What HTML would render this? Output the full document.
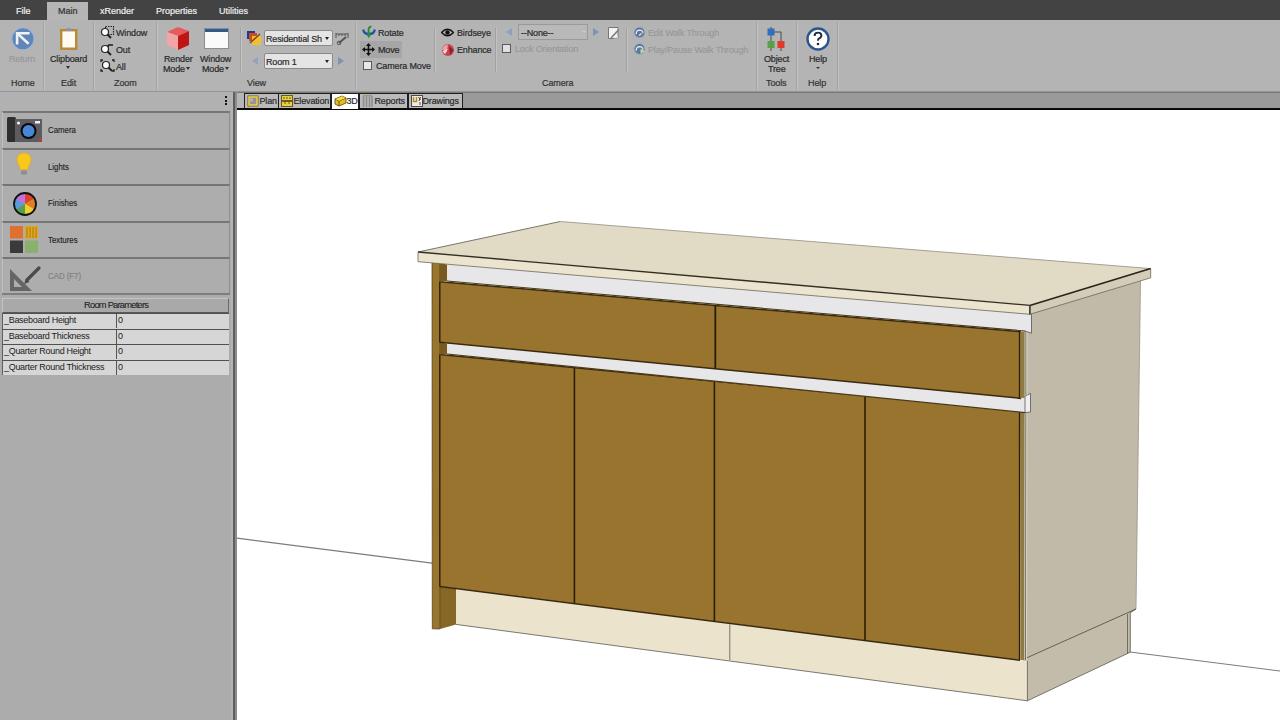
<!DOCTYPE html>
<html><head><meta charset="utf-8">
<style>
*{margin:0;padding:0;box-sizing:border-box}
html,body{width:1280px;height:720px;overflow:hidden;background:#fff;font-family:"Liberation Sans",sans-serif;}
.a{position:absolute;white-space:nowrap}
#top{position:absolute;left:0;top:0;width:1280px;height:20px;background:#434343}
.tt{position:absolute;top:5.5px;font-size:9px;color:#f0f0f0;line-height:11px;-webkit-text-stroke:0.2px #f0f0f0}
#ribbon{position:absolute;left:0;top:20px;width:1280px;height:72px;background:#b4b4b4;border-bottom:1px solid #959595}
.rt{position:absolute;margin-top:0.5px;font-size:9px;line-height:11px;color:#2a2a2a;white-space:nowrap;-webkit-text-stroke:0.2px #2a2a2a;letter-spacing:-0.15px}
.gl{position:absolute;margin-top:1px;font-size:9px;line-height:11px;color:#333;white-space:nowrap;-webkit-text-stroke:0.2px #333;letter-spacing:-0.1px}
.sep{position:absolute;width:2px;border-left:1px solid #a2a2a2;border-right:1px solid #c2c2c2}
.dis{color:#989898;-webkit-text-stroke:0.15px #989898}
#panel{position:absolute;left:0;top:92px;width:237px;height:628px;background:#acacac}
.ph{position:absolute;left:0;top:0;width:232px;height:19px;background:#b1b1b1}
.sec{position:absolute;left:2px;width:228px;background:#adadad;border-top:2px solid #767676;border-left:1px solid #c0c0c0;border-right:1px solid #8e8e8e}
.st{position:absolute;left:45.3px;font-size:9.8px;line-height:11px;color:#222;white-space:nowrap;letter-spacing:0;transform:scaleX(0.8);transform-origin:0 0;margin-top:-1px;-webkit-text-stroke:0.15px #222}
.row{position:absolute;left:2px;width:227px;height:15.5px;background:#d6d6d6;border-top:1.5px solid #505050;border-left:1px solid #606060}
.rl{position:absolute;left:1px;top:1px;font-size:9px;line-height:11px;color:#222;letter-spacing:-0.3px}
.rv{position:absolute;left:113px;top:0;height:14px;border-left:1.5px solid #555;padding-left:1px;font-size:9px;line-height:12px;color:#222}
#tabbar{position:absolute;left:237px;top:92px;width:1043px;height:18px;background:#9a9a9a;border-top:1px solid #7a7a7a;border-bottom:2px solid #0a0a0a}
.tab{position:absolute;top:0px;height:15px;background:#bababa;border:1.5px solid #1e1e1e;border-bottom:none;font-size:9px;line-height:13px;color:#2a2a2a}
</style></head><body>

<div id="top">
  <div class="tt" style="left:16px">File</div>
  <div style="position:absolute;left:47px;top:2px;width:41px;height:18px;background:#b5b5b5"></div>
  <div class="tt" style="left:58px;color:#333;-webkit-text-stroke:0.2px #333">Main</div>
  <div class="tt" style="left:100px">xRender</div>
  <div class="tt" style="left:156px">Properties</div>
  <div class="tt" style="left:219px">Utilities</div>
</div>

<div id="ribbon">
  <!-- separators (ribbon y offset 20) -->
  <div class="sep" style="left:43px;top:2px;height:68px"></div>
  <div class="sep" style="left:93px;top:2px;height:68px"></div>
  <div class="sep" style="left:156px;top:2px;height:68px"></div>
  <div class="sep" style="left:240px;top:7px;height:45px"></div>
  <div class="sep" style="left:355px;top:2px;height:68px"></div>
  <div class="sep" style="left:434px;top:8px;height:44px"></div>
  <div class="sep" style="left:495px;top:8px;height:44px"></div>
  <div class="sep" style="left:626px;top:8px;height:44px"></div>
  <div class="sep" style="left:756px;top:2px;height:68px"></div>
  <div class="sep" style="left:796px;top:2px;height:68px"></div>
  <div class="sep" style="left:837px;top:2px;height:68px"></div>

  <!-- Home -->
  <svg class="a" style="left:10px;top:6px" width="26" height="26" viewBox="0 0 26 26">
    <circle cx="12.9" cy="12.7" r="11.2" fill="#5f86b6" stroke="#a2b6d0" stroke-width="1.3"/>
    <path d="M7.1 18.5 L7.1 7.25 L19.6 7.25" stroke="#eef2f6" stroke-width="2.6" fill="none" stroke-linejoin="miter"/>
    <path d="M7.8 7.9 L18.6 17.7" stroke="#eef2f6" stroke-width="2.6"/>
  </svg>
  <div class="rt dis" style="left:9px;top:33px">Return</div>
  <div class="gl" style="left:11px;top:57px">Home</div>

  <!-- Edit -->
  <svg class="a" style="left:59px;top:6px" width="20" height="24" viewBox="0 0 20 24">
    <rect x="2.2" y="4.2" width="15" height="18.5" fill="#fdfbf2" stroke="#b78a34" stroke-width="2.4"/>
    <path d="M6.5 5 Q6.5 2 9.7 2 Q13 2 13 5 Z" fill="#8f93a8"/>
  </svg>
  <div class="rt" style="left:50px;top:33px">Clipboard</div>
  <div class="a" style="left:66px;top:46px;width:0;height:0;border-left:2.5px solid transparent;border-right:2.5px solid transparent;border-top:3px solid #333"></div>
  <div class="gl" style="left:61px;top:57px">Edit</div>

  <!-- Zoom -->
  <svg class="a" style="left:100px;top:5px" width="16" height="50" viewBox="0 0 16 50">
    <g fill="none" stroke="#222" stroke-width="1.2">
      <rect x="5.5" y="1.5" width="8" height="8" stroke-dasharray="1.5 1"/>
      <circle cx="5" cy="7" r="3.5" fill="#fff"/>
      <path d="M7.5 9.5 L11 13" stroke-width="2"/>
      <path d="M8 20 L13 20" stroke-width="1.6"/><path d="M8 20 L8 22" stroke-width="1.6"/>
      <circle cx="5" cy="24" r="3.5" fill="#fff"/>
      <path d="M7.5 26.5 L11 30" stroke-width="2"/>
      <path d="M1 37 L1 35 L3 35 M12 35 L14 35 L14 37 M1 44 L1 46 L3 46 M12 46 L14 46 L14 44" stroke-width="1.3"/>
      <circle cx="6" cy="40" r="3.5" fill="#fff"/>
      <path d="M8.5 42.5 L12 46" stroke-width="2"/>
    </g>
  </svg>
  <div class="rt" style="left:116px;top:7px">Window</div>
  <div class="rt" style="left:116px;top:24px">Out</div>
  <div class="rt" style="left:116px;top:41px">All</div>
  <div class="gl" style="left:114px;top:57px">Zoom</div>

  <!-- Render Mode -->
  <svg class="a" style="left:166px;top:6px" width="24" height="25" viewBox="0 0 24 25">
    <path d="M1 6 L12 1 L23 5 L12 10 Z" fill="#e65a5a"/>
    <path d="M1 6 L12 10 L12 24 L1 19 Z" fill="#f3a4a4"/>
    <path d="M12 10 L23 5 L23 19 L12 24 Z" fill="#c01515"/>
  </svg>
  <div class="rt" style="left:164px;top:33px">Render</div>
  <div class="rt" style="left:163px;top:43px">Mode<span style="display:inline-block;margin-left:1px;vertical-align:2px;width:0;height:0;border-left:2.5px solid transparent;border-right:2.5px solid transparent;border-top:3px solid #333;-webkit-text-stroke:0"></span></div>

  <!-- Window Mode -->
  <svg class="a" style="left:204px;top:8px" width="25" height="21" viewBox="0 0 25 21">
    <rect x="0.5" y="0.5" width="24" height="20" fill="#fafafa" stroke="#8d8d8d"/>
    <rect x="1" y="1" width="23" height="3" fill="#2e5a90"/>
  </svg>
  <div class="rt" style="left:200px;top:33px">Window</div>
  <div class="rt" style="left:202px;top:43px">Mode<span style="display:inline-block;margin-left:1px;vertical-align:2px;width:0;height:0;border-left:2.5px solid transparent;border-right:2.5px solid transparent;border-top:3px solid #333;-webkit-text-stroke:0"></span></div>

  <!-- View -->
  <svg class="a" style="left:247px;top:11px" width="15" height="15" viewBox="0 0 15 15">
    <rect x="0" y="0" width="8" height="8" fill="#1a3a9a"/>
    <rect x="2" y="2" width="8" height="8" fill="#d04a20"/>
    <rect x="5" y="5" width="9" height="9" fill="#f0c030"/>
    <path d="M3 12 L13 3" stroke="#7a4a20" stroke-width="1.5"/>
  </svg>
  <div class="a" style="left:264px;top:10px;width:69px;height:16px;background:#e4e4e4;border:1.5px solid #8a8a8a;border-radius:2px"></div>
  <div class="rt" style="left:266px;top:13px;width:57px;overflow:hidden">Residential Sh</div>
  <div class="a" style="left:325px;top:17px;width:0;height:0;border-left:2.5px solid transparent;border-right:2.5px solid transparent;border-top:3px solid #222"></div>
  <svg class="a" style="left:335px;top:12px" width="14" height="13" viewBox="0 0 14 13">
    <path d="M1 1 L1 6 M1 2 L13 2 M13 1 L13 6 M4 2 L4 4 M7 2 L7 4 M10 2 L10 4" stroke="#555" stroke-width="1" fill="none"/>
    <path d="M11 5 L4 11" stroke="#555" stroke-width="2"/>
    <circle cx="4" cy="11" r="1.8" fill="none" stroke="#555"/>
  </svg>
  <div class="a" style="left:264px;top:33px;width:69px;height:16px;background:#e4e4e4;border:1.5px solid #8a8a8a;border-radius:2px"></div>
  <div class="rt" style="left:266px;top:36px">Room 1</div>
  <div class="a" style="left:325px;top:40px;width:0;height:0;border-left:2.5px solid transparent;border-right:2.5px solid transparent;border-top:3px solid #222"></div>
  <div class="a" style="left:252px;top:37px;width:0;height:0;border-top:4px solid transparent;border-bottom:4px solid transparent;border-right:6px solid #93a3b8"></div>
  <div class="a" style="left:338px;top:37px;width:0;height:0;border-top:4px solid transparent;border-bottom:4px solid transparent;border-left:6px solid #7d93b0"></div>
  <div class="gl" style="left:247px;top:57px">View</div>

  <!-- Camera group: rotate/move -->
  <svg class="a" style="left:362px;top:5px" width="14" height="14" viewBox="0 0 14 14">
    <path d="M1.2 4.5 Q1.8 9 7 9 Q12.2 9 12.8 4.5" stroke="#1f56a6" stroke-width="2.3" fill="none"/>
    <path d="M9.5 1.5 Q6.3 1.6 6.6 5.5 L6.8 10" stroke="#2f8f30" stroke-width="2" fill="none"/>
    <path d="M4.3 9.3 L6.8 13.2 L9.3 9.3 Z" fill="#2f8f30"/>
  </svg>
  <div class="rt" style="left:378px;top:7px">Rotate</div>
  <div class="a" style="left:360px;top:21px;width:42px;height:17px;background:#a6a6a6"></div>
  <svg class="a" style="left:362px;top:23px" width="13" height="13" viewBox="0 0 13 13">
    <path d="M6.5 1 L6.5 12 M1 6.5 L12 6.5" stroke="#111" stroke-width="1.6"/>
    <path d="M6.5 0 L4 3 L9 3 Z M6.5 13 L4 10 L9 10 Z M0 6.5 L3 4 L3 9 Z M13 6.5 L10 4 L10 9 Z" fill="#111"/>
  </svg>
  <div class="rt" style="left:378px;top:24px">Move</div>
  <div class="a" style="left:363px;top:41px;width:9px;height:9px;background:#e8e8e8;border:1px solid #5a5a5a"></div>
  <div class="rt" style="left:376px;top:40px">Camera Move</div>

  <svg class="a" style="left:441px;top:8px" width="13" height="9" viewBox="0 0 13 9">
    <path d="M0.5 4.5 Q6.5 -2 12.5 4.5 Q6.5 11 0.5 4.5 Z" fill="none" stroke="#111" stroke-width="1.4"/>
    <circle cx="6.5" cy="4.5" r="2.2" fill="#111"/>
  </svg>
  <div class="rt" style="left:457px;top:7px">Birdseye</div>
  <svg class="a" style="left:441px;top:23px" width="14" height="14" viewBox="0 0 14 14">
    <circle cx="7" cy="7" r="6" fill="#c84450"/>
    <path d="M1 7 Q2 2 7 1.5 L6 7 Z" fill="#f0a0a8"/>
    <path d="M1.5 8 L7 6 L4 11 Z" fill="#fbe0e2"/>
    <path d="M8 3 L12.5 7 L9 12 Z" fill="#8a2030"/>
  </svg>
  <div class="rt" style="left:457px;top:24px">Enhance</div>

  <div class="a" style="left:506px;top:8px;width:0;height:0;border-top:4px solid transparent;border-bottom:4px solid transparent;border-right:6px solid #8fa2bb"></div>
  <div class="a" style="left:518px;top:4px;width:70px;height:16px;background:#b9b9b9;border:1px solid #9a9a9a"></div>
  <div class="rt" style="left:521px;top:7px">--None--</div>
  <div class="a" style="left:582px;top:11px;width:0;height:0;border-left:2px solid transparent;border-right:2px solid transparent;border-top:2px solid #cfcfcf"></div>
  <div class="a" style="left:593px;top:8px;width:0;height:0;border-top:4px solid transparent;border-bottom:4px solid transparent;border-left:6px solid #7d93b0"></div>
  <svg class="a" style="left:607px;top:5.5px" width="14" height="14" viewBox="0 0 14 14">
    <path d="M1.5 1.5 L11 1.5 L11 12.5 L1.5 12.5 Z" fill="#f2f2f2" stroke="#777" stroke-width="1"/>
    <path d="M4 12 L11.5 4" stroke="#7a7a7a" stroke-width="1.6"/>
    <path d="M7 12.5 L11 12.5 L11 9" fill="#d8d8d8"/>
  </svg>
  <div class="a" style="left:502px;top:24px;width:9px;height:9px;background:#e0e0e0;border:1px solid #5a5a5a"></div>
  <div class="rt dis" style="left:515px;top:23px">Lock Orientation</div>

  <svg class="a" style="left:633px;top:6px" width="14" height="30" viewBox="0 0 14 30">
    <circle cx="6.5" cy="6.5" r="5.6" fill="#5f7696" stroke="#a3b0c4" stroke-width="1.1"/>
    <path d="M3.3 8.2 Q3 4.2 6.6 4.1 Q10 4.1 9.9 7.2" stroke="#e4eaf2" stroke-width="1.3" fill="none"/>
    <path d="M6 9.5 L8.5 7.5" stroke="#e4eaf2" stroke-width="1.4"/>
    <circle cx="6.5" cy="23" r="5.6" fill="#5f7696" stroke="#a3b0c4" stroke-width="1.1"/>
    <path d="M3.3 24.7 Q3 20.7 6.6 20.6 Q10 20.6 9.9 23.7" stroke="#e4eaf2" stroke-width="1.3" fill="none"/>
    <path d="M7.5 22.8 L12 25.3 L7.5 27.8 Z" fill="#b8dca0"/>
  </svg>
  <div class="rt dis" style="left:648px;top:7px">Edit Walk Through</div>
  <div class="rt dis" style="left:648px;top:24px">Play/Pause Walk Through</div>
  <div class="gl" style="left:542px;top:57px">Camera</div>

  <!-- Tools -->
  <svg class="a" style="left:767px;top:7px" width="20" height="25" viewBox="0 0 20 25">
    <path d="M4 0 L4 24 M4 5 L14 5 L14 24" stroke="#4a4a4a" stroke-width="1" fill="none"/>
    <rect x="0.5" y="1.5" width="7" height="7" fill="#2f6fc0"/>
    <rect x="0.5" y="14" width="7" height="7" fill="#5aa04a"/>
    <rect x="10.5" y="14" width="7" height="7" fill="#e03a2a"/>
  </svg>
  <div class="rt" style="left:764px;top:33px">Object</div>
  <div class="rt" style="left:768px;top:43px">Tree</div>
  <div class="gl" style="left:766px;top:57px">Tools</div>

  <!-- Help -->
  <svg class="a" style="left:806px;top:7px" width="24" height="24" viewBox="0 0 24 24">
    <circle cx="12" cy="12" r="10.5" fill="#fff" stroke="#2a5590" stroke-width="2.4"/>
    <path d="M8.6 9 Q8.6 5.6 12 5.6 Q15.4 5.6 15.4 8.6 Q15.4 10.6 12.8 11.6 Q12 12 12 13.8" stroke="#1a2a40" stroke-width="1.9" fill="none"/>
    <circle cx="12" cy="17" r="1.3" fill="#1a2a40"/>
  </svg>
  <div class="rt" style="left:809px;top:33px">Help</div>
  <div class="a" style="left:816px;top:47px;width:0;height:0;border-left:2px solid transparent;border-right:2px solid transparent;border-top:2.5px solid #333"></div>
  <div class="gl" style="left:808px;top:57px">Help</div>
</div>

<div id="panel">
  <div class="ph"></div>
  <div class="a" style="left:225px;top:4px;width:2px;height:2px;background:#111"></div>
  <div class="a" style="left:225px;top:7.5px;width:2px;height:2px;background:#111"></div>
  <div class="a" style="left:225px;top:11px;width:2px;height:2px;background:#111"></div>
  <div class="a" style="left:231px;top:0;width:2px;height:628px;background:#b4b4b4"></div>
  <div class="a" style="left:233px;top:0;width:2px;height:628px;background:#5e5e5e"></div>
  <div class="a" style="left:235px;top:0;width:2px;height:628px;background:#8c8c8c"></div>

  <div class="sec" style="top:18.5px;height:37.5px">
    <svg class="a" style="left:3.5px;top:4px" width="36" height="27" viewBox="0 0 36 27">
      <rect x="0" y="0" width="9" height="25" rx="1.5" fill="#2e2e2e"/>
      <rect x="8" y="2" width="27" height="23" fill="#5c5c60"/>
      <circle cx="21.5" cy="14" r="8" fill="#0a0a0a"/>
      <circle cx="21.5" cy="14" r="6" fill="#4a86d8"/>
      <circle cx="11.5" cy="6" r="1.6" fill="#f0f0f0"/>
      <rect x="28" y="4" width="5" height="2.5" fill="#f0f0f0"/>
      <circle cx="33" cy="23" r="1.8" fill="#c83a3a"/>
    </svg>
    <div class="st" style="top:12px">Camera</div>
  </div>
  <div class="sec" style="top:55.5px;height:37px">
    <svg class="a" style="left:12.8px;top:2.5px" width="18" height="26" viewBox="0 0 18 26">
      <path d="M8 1 C3.2 1 1 4.5 1 7.8 C1 11 3.6 13 4.2 17.5 L11.8 17.5 C12.4 13 15 11 15 7.8 C15 4.5 12.8 1 8 1 Z" fill="#f9c81c" stroke="#e8a818" stroke-width="0.8"/>
      <rect x="5" y="18.5" width="6" height="4" rx="1.2" fill="#8c8c94"/>
    </svg>
    <div class="st" style="top:12px">Lights</div>
  </div>
  <div class="sec" style="top:92px;height:37px">
    <svg class="a" style="left:8.5px;top:5px" width="26" height="26" viewBox="0 0 26 26">
      <circle cx="13" cy="13" r="11" fill="#e8a030"/>
      <path d="M13 13 L13 2 A11 11 0 0 1 22.5 7.5 Z" fill="#d84030"/>
      <path d="M13 13 L22.5 7.5 A11 11 0 0 1 22.5 18.5 Z" fill="#e08020"/>
      <path d="M13 13 L22.5 18.5 A11 11 0 0 1 13 24 Z" fill="#f0d030"/>
      <path d="M13 13 L13 24 A11 11 0 0 1 3.5 18.5 Z" fill="#50a050"/>
      <path d="M13 13 L3.5 18.5 A11 11 0 0 1 3.5 7.5 Z" fill="#5a9ae0"/>
      <path d="M13 13 L3.5 7.5 A11 11 0 0 1 13 2 Z" fill="#c070e0"/>
      <circle cx="13" cy="13" r="11" fill="none" stroke="#111" stroke-width="1.8"/>
    </svg>
    <div class="st" style="top:12px">Finishes</div>
  </div>
  <div class="sec" style="top:128.5px;height:37px">
    <svg class="a" style="left:7px;top:3px" width="30" height="28" viewBox="0 0 30 28">
      <rect x="0" y="0" width="13" height="12.5" fill="#e07030"/>
      <rect x="15" y="0" width="13" height="12.5" fill="#e0a820"/>
      <path d="M17 1 L17 12 M20 1 L20 12 M23 1 L23 12 M26 1 L26 12" stroke="#9a7010" stroke-width="0.8"/>
      <rect x="0" y="14.5" width="13" height="12.5" fill="#3a3a3a"/>
      <rect x="15" y="14.5" width="13" height="12.5" fill="#8ab070"/>
    </svg>
    <div class="st" style="top:12px">Textures</div>
  </div>
  <div class="sec" style="top:165px;height:37px">
    <svg class="a" style="left:3px;top:1px" width="36" height="32" viewBox="0 0 36 32">
      <path d="M4 9 L4 31 L26 31 Z M8 19 L8 27 L16 27 Z" fill="#656565" fill-rule="evenodd"/>
      <path d="M21 20 L33 8" stroke="#4a4a4a" stroke-width="3.2" stroke-linecap="round"/>
      <path d="M18 24 L20 18.5 L23.5 22 Z" fill="#4a4a4a"/>
    </svg>
    <div class="st" style="top:12px;color:#828282;-webkit-text-stroke:0.2px #828282">CAD (F7)</div>
  </div>
  <div class="a" style="left:2px;top:201px;width:228px;height:2px;background:#7e7e7e"></div>

  <div class="a" style="left:2px;top:206px;width:227px;height:15px;background:#a9a9a9;border:1px solid #c4c4c4;border-bottom:1.5px solid #5a5a5a;border-right:1.5px solid #6a6a6a"></div>
  <div class="a" style="left:84px;top:208px;font-size:9.3px;line-height:11px;color:#222;letter-spacing:-0.75px;-webkit-text-stroke:0.1px #222">Room Parameters</div>
  <div class="row" style="top:221px"><div class="rl">_Baseboard Height</div><div class="rv">0</div></div>
  <div class="row" style="top:236.5px"><div class="rl">_Baseboard Thickness</div><div class="rv">0</div></div>
  <div class="row" style="top:252px"><div class="rl">_Quarter Round Height</div><div class="rv">0</div></div>
  <div class="row" style="top:267.5px"><div class="rl">_Quarter Round Thickness</div><div class="rv">0</div></div>
</div>

<div id="tabbar">
  <div class="a" style="left:0;top:0;width:7px;height:15px;background:#b6b6b6"></div>
  <div class="tab" style="left:7px;width:35px"></div>
  <svg class="a" style="left:9.5px;top:1.5px" width="12" height="12" viewBox="0 0 12 12">
    <rect x="1" y="1" width="10" height="10" fill="#9a9098" stroke="#6a5a20" stroke-width="1"/>
    <rect x="2" y="2" width="8" height="8" fill="none" stroke="#e8d040" stroke-width="1.5"/>
    <rect x="3" y="3.5" width="3" height="3" fill="#b8b0b8"/>
  </svg>
  <div class="rt" style="left:22.5px;top:2px">Plan</div>
  <div class="tab" style="left:41px;width:53px"></div>
  <svg class="a" style="left:43.5px;top:1.5px" width="12" height="12" viewBox="0 0 12 12">
    <rect x="0.5" y="0.5" width="11" height="5" fill="#e8d040" stroke="#6a5a20" stroke-width="1"/>
    <rect x="0.5" y="6.5" width="11" height="5" fill="#e8d040" stroke="#6a5a20" stroke-width="1"/>
    <path d="M3 2 V4 M6 2 V4 M9 2 V4 M3 8 H5 M7 8 H9" stroke="#6a5a20" stroke-width="1"/>
  </svg>
  <div class="rt" style="left:56.5px;top:2px">Elevation</div>
  <div class="tab" style="left:94px;width:28px;background:#fff;height:16px"></div>
  <svg class="a" style="left:96.5px;top:1.5px" width="13" height="12" viewBox="0 0 13 12">
    <path d="M1 4 L8 1 L12 3 L12 8 L5 11 L1 9 Z" fill="#e2bc20" stroke="#6a5410" stroke-width="0.9"/>
    <path d="M1 4 L5 6 L12 3 M5 6 L5 11" stroke="#6a5410" stroke-width="0.9" fill="none"/>
    <path d="M1.5 4.2 L8 1.3 L11.5 3 L5 5.8 Z" fill="#f4dc50"/>
  </svg>
  <div class="rt" style="left:109.5px;top:2px">3D</div>
  <div class="tab" style="left:122px;width:49px"></div>
  <svg class="a" style="left:125px;top:0.5px" width="11" height="14" viewBox="0 0 11 14">
    <path d="M1.5 2 V13 M4.5 2 V13 M7.5 2 V13 M10 2 V13" stroke="#8e8e8e" stroke-width="1.6"/>
    <path d="M1 1.5 H10" stroke="#a09a70" stroke-width="1.2"/>
  </svg>
  <div class="rt" style="left:137.5px;top:2px">Reports</div>
  <div class="tab" style="left:171px;width:55px"></div>
  <svg class="a" style="left:173.5px;top:1.5px" width="12" height="12" viewBox="0 0 12 12">
    <rect x="0.5" y="0.5" width="11" height="11" fill="#ecebe4" stroke="#4a4a4a"/>
    <path d="M2.5 2 V6.5 H5.5 V2" stroke="#b08a20" stroke-width="1.4" fill="none"/>
    <path d="M7.5 2 L9.5 5 M9.5 2 L8 6 M9 7 V10" stroke="#4a4a4a" stroke-width="1" fill="none"/>
  </svg>
  <div class="rt" style="left:185.5px;top:2px">Drawings</div>
</div>

<div style="position:absolute;left:237px;top:110px;width:1043px;height:610px;background:#fff"></div>
<svg class="a" style="left:0;top:0" width="1280" height="720" viewBox="0 0 1280 720">
  <!-- floor lines -->
  <path d="M237 538.2 L432 563.1" stroke="#7c7c7c" stroke-width="1.2" fill="none"/>
  <path d="M1130 652 L1280 671" stroke="#7c7c7c" stroke-width="1.2" fill="none"/>
  <!-- right side panel -->
  <polygon points="1024,314 1140.5,281 1136,609 1023,659.5" fill="#c1baa8"/>
  <path d="M1140.5 281 L1136 609" stroke="#9a9488" stroke-width="0.8" fill="none"/>
  <!-- toe kick right side -->
  <polygon points="1023,658 1136,607.5 1130.3,612.6 1130.3,652.2 1027.4,700.8 1023,700" fill="#c3bcaa"/>
  <path d="M1027.4 700.8 L1130.3 652.2 L1130.3 612.6 M1127.5 614 L1127.5 653.5" stroke="#5a5a50" stroke-width="0.8" fill="none"/>
  <path d="M1023 659.5 L1136 609 L1130.3 612.6" stroke="#55554a" stroke-width="0.9" fill="none"/>
  <path d="M1025.5 661 L1025.5 700" stroke="#55554a" stroke-width="0.7" fill="none"/>
  <path d="M1024 660 L1024 700" stroke="#777" stroke-width="0.8"/>
  <!-- toe kick front -->
  <polygon points="456,589.4 1027.4,661 1027.4,700.8 456,624.4" fill="#ebe3cc"/>
  <path d="M456 624.4 L1027.4 700.8 L1027.4 661" stroke="#6a6a60" stroke-width="0.9" fill="none"/>
  <path d="M729.8 624.4 L729.8 660" stroke="#6a6a60" stroke-width="0.9"/>
  <!-- end panel recess -->
  <polygon points="439.6,586.5 456,589 456,624.4 440,629" fill="#876626"/>
  <!-- end panel front face -->
  <polygon points="432,262.5 439.8,263.3 439.8,629 432.3,628.8" fill="#9a752e" stroke="#4a3810" stroke-width="0.7"/>
  <!-- doors -->
  <polygon points="439.6,354.5 1021,411 1020,660.3 439.6,586.5" fill="#98742e"/>
  <path d="M439.6 354.5 L1021 411 M439.6 586.5 L1020 660.3" stroke="#3a2a10" stroke-width="1.5" fill="none"/>
  <path d="M574.4 367.6 L574.4 603.6 M714.4 381.3 L714.4 621.4 M865 396 L865 640.6" stroke="#2a1e08" stroke-width="1.6" fill="none"/>
  <path d="M439.8 354.5 L439.8 586.5" stroke="#2a1e08" stroke-width="1.4"/>
  <path d="M1019.5 411 L1019.5 660" stroke="#2a1e08" stroke-width="1.3"/>
  <polygon points="1020.3,411 1024.8,412 1024.3,660 1020.3,660" fill="#8f7a42"/>
  <path d="M1025 413 L1024.6 660" stroke="#cbc3a4" stroke-width="1"/>
  <path d="M1026 413 L1025.6 660" stroke="#555550" stroke-width="0.8"/>
  <path d="M1026.9 413 L1026.5 660" stroke="#dcdccc" stroke-width="0.9"/>
  <!-- lower rail -->
  <polygon points="439.6,342.2 447,343.8 447,354 439.6,354.5" fill="#7a5a1e"/>
  <polygon points="447,344 1025,396 1025,412.6 447,354" fill="#e7e7ea"/>
  <polygon points="1025,396 1030.5,393.5 1030.5,412 1025,412.6" fill="#efeff1" stroke="#444" stroke-width="0.7"/>
  <path d="M447 354 L1025 412.6" stroke="#4a3a18" stroke-width="1.2" fill="none"/>
  <!-- upper drawers -->
  <polygon points="439.6,281.7 1021,331.8 1021,398.4 439.6,342.2" fill="#98742e"/>
  <path d="M439.6 281.7 L1021 331.8 M439.6 342.2 L1021 398.4" stroke="#3a2a10" stroke-width="1.5" fill="none"/>
  <path d="M715.3 305.5 L715.3 368.9" stroke="#2a1e08" stroke-width="1.8"/>
  <path d="M439.8 281.7 L439.8 342.2" stroke="#2a1e08" stroke-width="1.4"/>
  <path d="M1019.5 331.8 L1019.5 398.4" stroke="#2a1e08" stroke-width="1.3"/>
  <polygon points="1020.3,331.8 1024.8,331.5 1024.8,397.5 1020.3,398.4" fill="#8f7a42"/>
  <path d="M1025 332 L1025 396" stroke="#cbc3a4" stroke-width="1"/>
  <path d="M1026 332 L1026 395" stroke="#555550" stroke-width="0.8"/>
  <path d="M1026.9 332 L1026.9 395" stroke="#dcdccc" stroke-width="0.9"/>
  <!-- top rail -->
  <polygon points="439.6,263.3 447,264.4 447,281 439.6,281.7" fill="#7a5a1e"/>
  <polygon points="447,264.4 1031.5,314 1031.5,333.2 1025,331 447,281" fill="#e7e7ea"/>
  <path d="M1031.5 314 L1031.5 333.2 L1025 331" stroke="#444" stroke-width="0.7" fill="none"/>
  <path d="M447 281 L1025 331" stroke="#4a3a18" stroke-width="1.1" fill="none"/>
  <!-- countertop -->
  <polygon points="418,252 560.3,221.5 1150.7,268.6 1029.8,305.4" fill="#e1dac5"/>
  <path d="M418 252 L560.3 221.5" stroke="#77776e" stroke-width="1" fill="none"/>
  <path d="M560.3 221.5 L1150.7 268.6" stroke="#9c988c" stroke-width="0.9" fill="none"/>
  <polygon points="418,252 1029.8,305.4 1029.8,314.3 418,261.7" fill="#ebe4ce"/>
  <polygon points="1029.8,305.4 1150.7,268.6 1150.7,277.8 1029.8,314.3" fill="#d2ccb8"/>
  <path d="M418 252 L1029.8 305.4" stroke="#332d22" stroke-width="1.35" fill="none"/>
  <path d="M1029.8 305.4 L1150.7 268.6" stroke="#2a2418" stroke-width="1.6" fill="none"/>
  <path d="M418 252 L418 261.7 L1029.8 314.3 L1150.7 277.8 L1150.7 268.6 M1029.8 305.4 L1029.8 314.3" stroke="#6a6658" stroke-width="0.8" fill="none"/>
  <path d="M1029.9 305.4 L1029.9 314.6" stroke="#2a2418" stroke-width="1.3"/>
</svg>

</body></html>
